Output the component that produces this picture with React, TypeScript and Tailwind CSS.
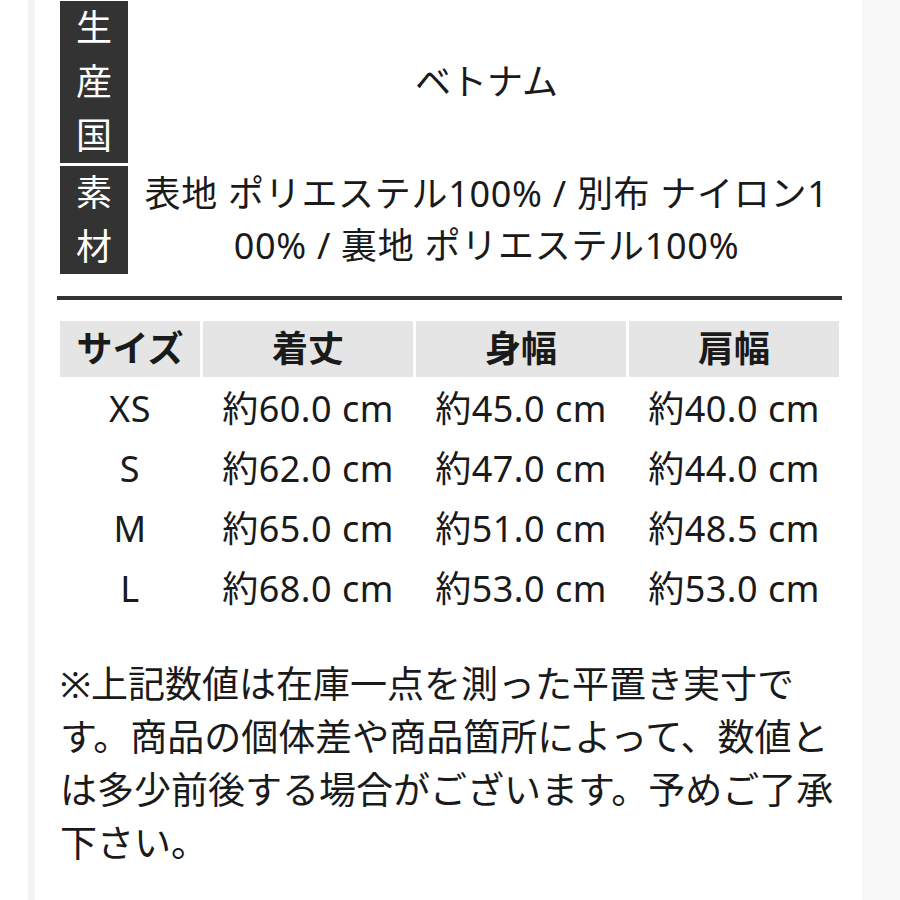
const rows = [
  ["XS", "約60.0 cm", "約45.0 cm", "約40.0 cm"],
  ["S", "約62.0 cm", "約47.0 cm", "約44.0 cm"],
  ["M", "約65.0 cm", "約51.0 cm", "約48.5 cm"],
  ["L", "約68.0 cm", "約53.0 cm", "約53.0 cm"],
]

const headers = ["サイズ", "着丈", "身幅", "肩幅"]

function Label({ chars }: { chars: string[] }) {
  return (
    <div className="flex flex-col items-center justify-center bg-[#333333] text-white text-[36px] leading-[54px]">
      {chars.map((c) => (
        <span key={c}>{c}</span>
      ))}
    </div>
  )
}

export default function App() {
  return (
    <div
      className="flex min-h-[900px] w-[900px] bg-white text-[#1a1a1a]"
      style={{ fontFamily: '"Noto Sans", "Noto Sans CJK JP", sans-serif' }}
    >
      <div className="w-[28px] shrink-0 bg-white" />
      <div className="w-[7px] shrink-0 bg-[#f4f4f4]" />
      <div className="w-[827px] shrink-0 bg-white pl-[22px] pr-[20px] pt-[1px] pb-10">
        {/* spec table */}
        <div className="ml-[3px] grid grid-cols-[68px_1fr] gap-[3px]">
          <div className="h-[162px]">
            <Label chars={["生", "産", "国"]} />
          </div>
          <div className="flex items-center justify-center text-[36px]">ベトナム</div>
          <Label chars={["素", "材"]} />
          <div className="flex items-center justify-center px-[6px] text-center text-[36px] leading-[52px] tracking-[0.7px] break-all">
            表地 ポリエステル100% / 別布 ナイロン100% / 裏地 ポリエステル100%
          </div>
        </div>

        <div className="mt-[22px] h-[4px] bg-[#333333]" />

        {/* size table */}
        <div className="ml-[3px] mt-[21px] grid grid-cols-[140px_210px_210px_210px] gap-[3px]">
          {headers.map((h) => (
            <div
              key={h}
              className="flex h-[56px] items-center justify-center bg-[#e5e5e5] text-[36px] font-bold"
            >
              {h}
            </div>
          ))}
          {rows.map((r) =>
            r.map((cell, i) => (
              <div
                key={r[0] + i}
                className="flex h-[57px] items-center justify-center text-[36px] tracking-[0.5px]"
              >
                {cell}
              </div>
            )),
          )}
        </div>

        <p className="ml-[3px] mt-[40px] w-[790px] text-[37px] leading-[53px]">
          ※上記数値は在庫一点を測った平置き実寸です。商品の個体差や商品箇所によって、数値とは多少前後する場合がございます。予めご了承下さい。
        </p>
      </div>
      <div className="flex-1 bg-[#f8f8f8]" />
    </div>
  )
}
